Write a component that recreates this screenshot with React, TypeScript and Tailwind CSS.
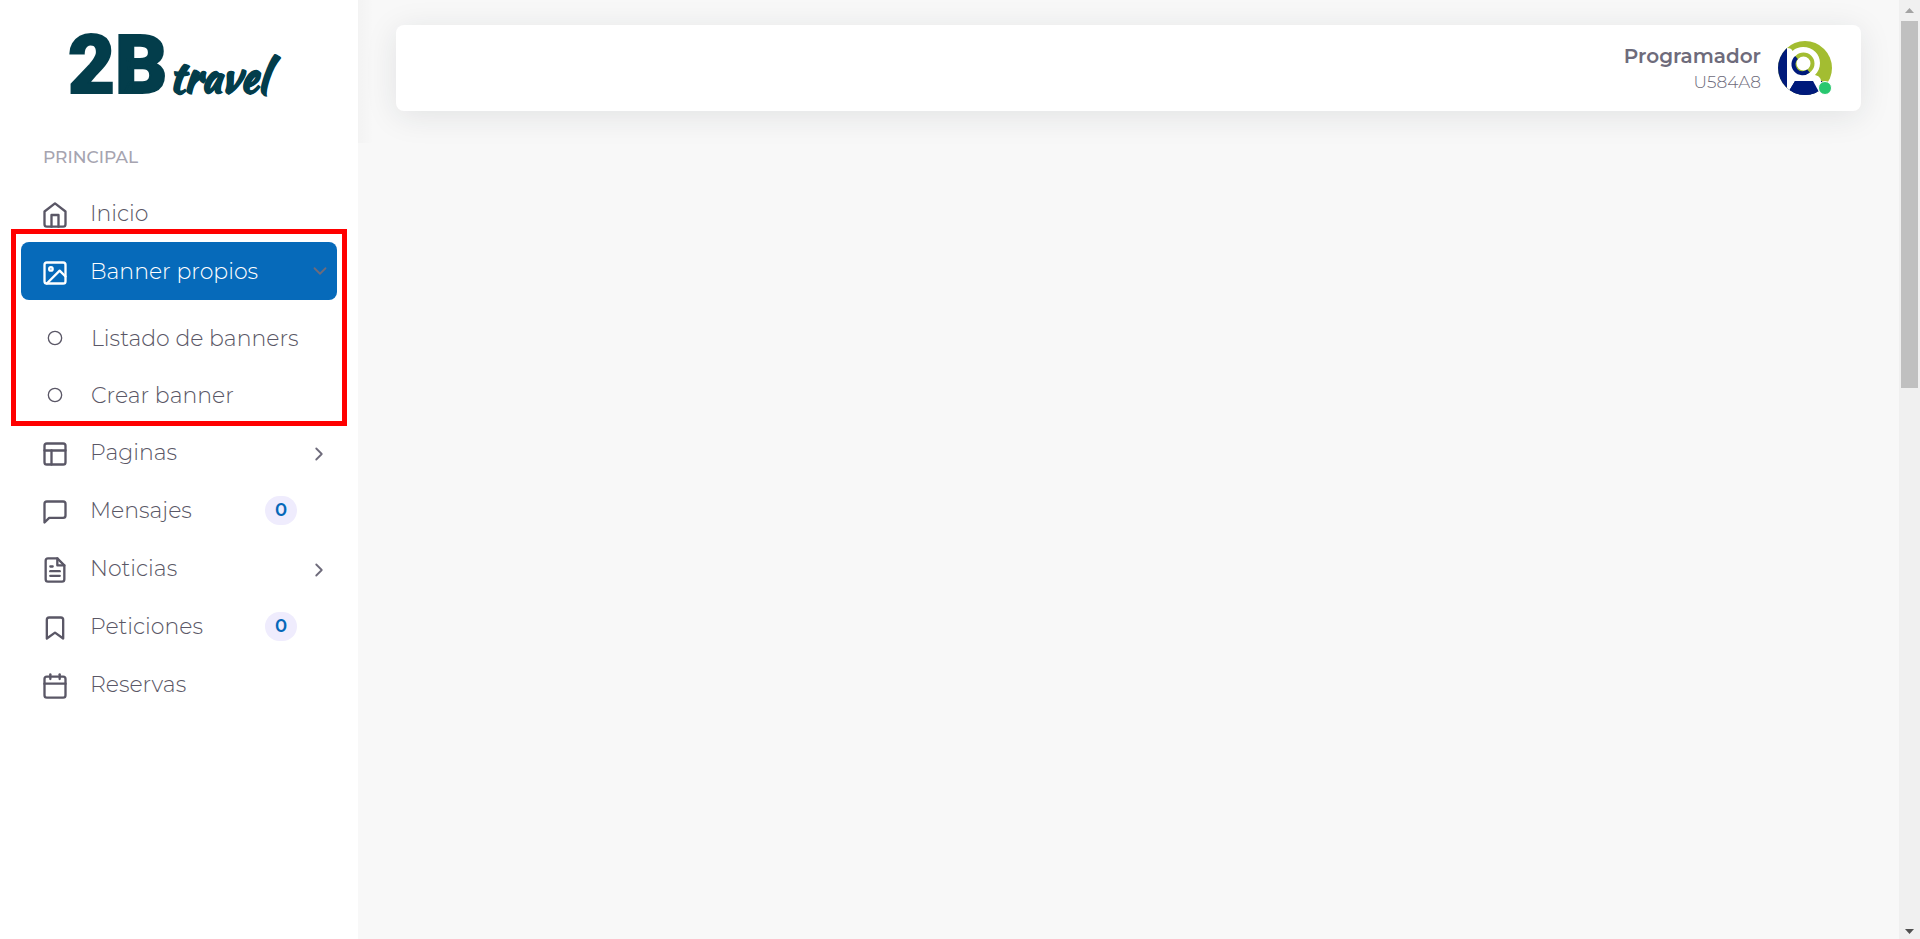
import type { IconType } from 'react-icons';
import {
  FiBookmark,
  FiCalendar,
  FiChevronDown,
  FiChevronRight,
  FiCircle,
  FiFileText,
  FiHome,
  FiImage,
  FiLayout,
  FiMessageSquare,
} from 'react-icons/fi';

type Item = {
  label: string;
  icon: IconType;
  badge?: number;
  expandable?: boolean;
};

const SUB_ITEMS = ['Listado de banners', 'Crear banner'];

const ITEMS: Item[] = [
  { label: 'Paginas', icon: FiLayout, expandable: true },
  { label: 'Mensajes', icon: FiMessageSquare, badge: 0 },
  { label: 'Noticias', icon: FiFileText, expandable: true },
  { label: 'Peticiones', icon: FiBookmark, badge: 0 },
  { label: 'Reservas', icon: FiCalendar },
];

function Logo() {
  return (
    <a href="#" aria-label="2B travel" className="block w-fit text-[#033d4b]">
      <svg width="250" height="110" viewBox="-10 0 250 110" fill="currentColor" stroke="currentColor" aria-hidden>
        <text x="0" y="84" fontFamily="Roboto, sans-serif" fontWeight="900" fontSize="81" strokeWidth="2">
          2B
        </text>
        <text
          x="101"
          y="83"
          fontFamily="'Kaushan Script', Lobster, Pacifico, Lato, cursive"
          fontWeight="900"
          fontSize="43"
          strokeWidth="1"
        >
          travel
        </text>
      </svg>
    </a>
  );
}

function MenuItem({ label, icon: Icon, badge, expandable }: Item) {
  return (
    <li>
      <a href="#" className="flex h-[58px] items-center pr-[7px] pl-5 text-[#5a5766]">
        <Icon className="mt-1 size-7 shrink-0" />
        <span className="ml-[21px] flex-1 pt-0.5 text-[22px] leading-7 font-light">{label}</span>
        {badge !== undefined && (
          <span className="mr-[33px] flex h-[29px] w-8 items-center justify-center rounded-full bg-[#efecfd] text-[18px] leading-6 font-semibold text-[#0568b9]">
            {badge}
          </span>
        )}
        {expandable && <FiChevronRight className="mt-1 size-[22px] text-[#6e6b7b]" />}
      </a>
    </li>
  );
}

// Open group, framed in red over the neighbouring rows
function BannerGroup() {
  return (
    <li className="relative">
      <button type="button" aria-expanded className="flex h-[58px] w-full items-center rounded-lg bg-[#066aba] pr-[6px] pl-5 text-left text-white">
        <FiImage className="mt-1 size-7 shrink-0" />
        <span className="ml-[21px] flex-1 pt-0.5 text-[22px] leading-7 font-light">Banner propios</span>
        <FiChevronDown className="size-[22px] text-[#6e6b7b]" />
      </button>
      <ul className="pt-[9px]">
        {SUB_ITEMS.map((label) => (
          <li key={label}>
            <a href="#" className="flex h-[57px] items-center pl-[26px] text-[#5a5766]">
              <FiCircle className="size-4 shrink-0" />
              <span className="ml-7 pt-0.5 text-[22px] leading-7 font-light">{label}</span>
            </a>
          </li>
        ))}
      </ul>
      <span aria-hidden className="pointer-events-none absolute -inset-x-[10px] -top-[13px] -bottom-[3px] border-[5px] border-[#ff0000]" />
    </li>
  );
}

function Sidebar() {
  return (
    <aside className="w-[358px] shrink-0 bg-white">
      <div className="pt-[9px] pl-[58px]">
        <Logo />
      </div>
      <nav className="mt-[26px] px-[21px]">
        <h2 className="pl-[22px] text-[17px] leading-6 font-medium text-[#a6a4b0]">PRINCIPAL</h2>
        <ul className="mt-[15px]">
          <MenuItem label="Inicio" icon={FiHome} />
          <BannerGroup />
          {ITEMS.map((item) => (
            <MenuItem key={item.label} {...item} />
          ))}
        </ul>
      </nav>
    </aside>
  );
}

function Avatar() {
  return (
    <span className="relative block size-[54px]">
      <svg viewBox="0 0 54 54" className="size-[54px]" aria-hidden>
        <defs>
          <clipPath id="disc">
            <circle cx="27" cy="27" r="27" />
          </clipPath>
        </defs>
        <g clipPath="url(#disc)">
          <path d="M0 0H54V54H0Z" fill="#a3bd31" />
          <path d="M0 0H9V54H0ZM9 40H44V54H9Z" fill="#001a7b" />
          <path
            d="M9 7C12 7 14 8 14.500 10C18 7 21 6 25 6C35 6 42 13 42 22C42 27 40 31 37 34C41 35 43 37 43 41V54H39L34 40H17L11 50L9 49Z"
            fill="#fff"
          />
          <path d="M17 40H35L41 51L36 54H15L11 50Z" fill="#001a7b" />
        </g>
        <circle cx="25.500" cy="22.500" r="9" fill="none" stroke="#a3bd31" strokeWidth="4" />
        <path d="M18.500 16.500A9 9 0 1 0 30.500 30" fill="none" stroke="#001a7b" strokeWidth="4" />
      </svg>
      <span className="absolute right-0 bottom-0 size-[14px] rounded-full border border-white bg-[#28c76f]" />
    </span>
  );
}

function Navbar() {
  return (
    <header className="flex h-[86px] items-center justify-end rounded-lg bg-white pr-[29px] shadow-[0_5px_32px_rgba(34,41,47,0.1)]">
      <a href="#" className="flex items-center gap-[17px] text-right text-[#6e6b7b]">
        <span className="flex flex-col pb-px">
          <span className="text-[20px] leading-7 font-semibold">Programador</span>
          <span className="text-[17px] leading-6 font-light">U584A8</span>
        </span>
        <Avatar />
      </a>
    </header>
  );
}

function ScrollTrack() {
  return (
    <div aria-hidden className="flex w-[21px] shrink-0 flex-col items-center bg-[#f0f0f0]">
      <span className="flex h-[21px] items-center">
        <svg width="9" height="5" viewBox="0 0 9 5">
          <path d="M0 5L4.500 0L9 5Z" fill="#a3a3a3" />
        </svg>
      </span>
      <span className="h-[367px] w-[17px] bg-[#c0c0c0]" />
      <span className="mt-auto flex h-4 items-center">
        <svg width="9" height="5" viewBox="0 0 9 5">
          <path d="M0 0L4.500 5L9 0Z" fill="#505050" />
        </svg>
      </span>
    </div>
  );
}

export default function App() {
  return (
    <div className="flex min-h-screen bg-[#f8f8f8] font-['Montserrat','Inter',sans-serif]">
      <Sidebar />
      <main className="relative min-w-0 flex-1 overflow-hidden px-[38px] pt-[25px]">
        <span aria-hidden className="absolute top-0 left-0 h-[143px] w-4 bg-linear-to-r from-black/[0.02] to-transparent" />
        <Navbar />
      </main>
      <ScrollTrack />
    </div>
  );
}
